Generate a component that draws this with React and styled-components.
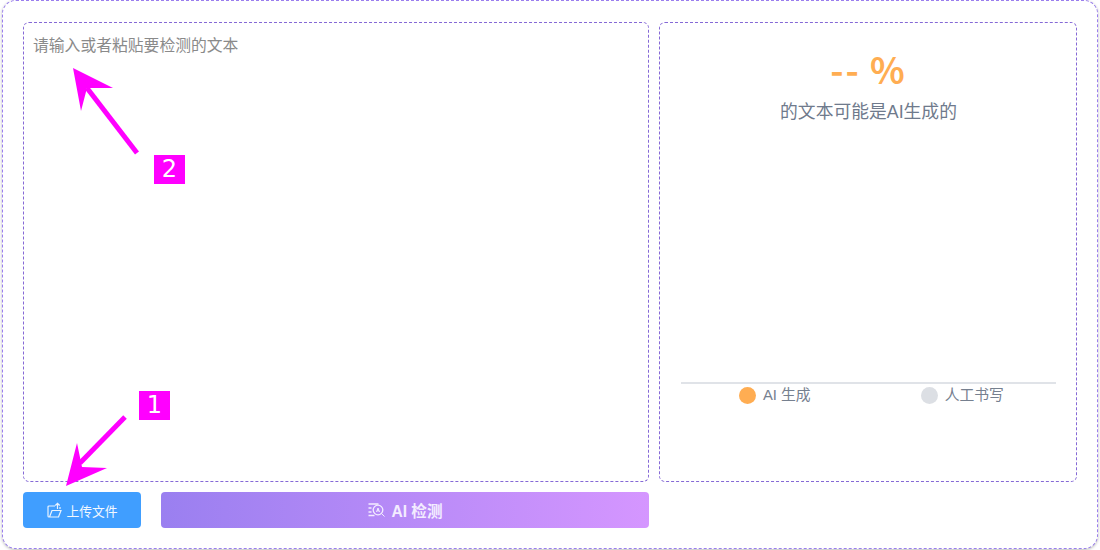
import React from "react";
import styled, { createGlobalStyle } from "styled-components";

const Global = createGlobalStyle`
  html, body { margin: 0; padding: 0; background: #fff; }
  #root { width: 1100px; height: 550px; overflow: hidden; }
  * { box-sizing: border-box; }
`;
const FONT = `"Liberation Sans", "Noto Sans CJK SC", sans-serif`;

const Stage = styled.div`
  position: relative;
  width: 1100px;
  height: 550px;
  padding: 0 2px 1px 2px;
  font-family: ${FONT};
`;
const Card = styled.main`
  width: 100%;
  height: 100%;
  border: 1px dashed #9a7eee;
  border-radius: 14px;
  box-shadow: 0 1px 3px rgba(0, 0, 0, 0.28);
  background: #fff;
  padding: 21px 20px 20px 20px;
  display: grid;
  grid-template-columns: 626px 418px;
  grid-template-rows: 460px 36px;
  column-gap: 10px;
  row-gap: 10px;
`;
const InputBox = styled.section`
  border: 1px dashed #8569d6;
  border-radius: 6px;
  padding: 10px 10px 10px 9px;
  display: flex;
`;
const TextInput = styled.textarea`
  flex: 1;
  border: 0;
  outline: 0;
  resize: none;
  padding: 3px 0 0 0;
  background: transparent;
  font: 15.8px/20px ${FONT};
  color: #333;
  &::placeholder { color: #8a8a8a; opacity: 1; }
`;
const ResultBox = styled.section`
  border: 1px dashed #8569d6;
  border-radius: 6px;
  padding: 23px 20px 0 21px;
  display: flex;
  flex-direction: column;
  align-items: center;
`;
const Percent = styled.div`
  font-family: "Noto Sans CJK SC", sans-serif;
  font-size: 36px;
  line-height: 44px;
  font-weight: 700;
  color: #ffad52;
  letter-spacing: 2px;
  word-spacing: -1px;
`;
const Caption = styled.div`
  margin-top: 10px;
  font-size: 17.8px;
  line-height: 24px;
  color: #6f7a8c;
`;
const Chart = styled.div`
  margin-top: 258px;
  width: 100%;
  border-top: 2px solid #e0e3e8;
  display: grid;
  grid-template-columns: 1fr 1fr;
  justify-items: center;
`;
const LegendItem = styled.div`
  display: flex;
  align-items: center;
  gap: 7px;
  font-size: 14.8px;
  line-height: 22px;
  color: #76808f;
`;
const Dot = styled.span`
  width: 17px;
  height: 17px;
  border-radius: 50%;
  background: ${(p) => p.$color};
`;
const Actions = styled.div`
  display: flex;
  gap: 20px;
`;
const UploadButton = styled.button`
  width: 118px;
  height: 36px;
  border: 0;
  border-radius: 4px;
  background: #409eff;
  color: #f2f8ff;
  font: 12.8px ${FONT};
  display: flex;
  align-items: center;
  justify-content: center;
  gap: 4px;
  padding: 0 0 0 1px;
`;
const DetectButton = styled.button`
  flex: 1;
  height: 36px;
  border: 0;
  border-radius: 4px;
  background: linear-gradient(90deg, #9a7ff0, #d596ff);
  color: #f3ecff;
  font: 700 15.6px ${FONT};
  display: flex;
  align-items: center;
  justify-content: center;
  gap: 6px;
  padding: 0 0 0 1px;
`;
const Overlay = styled.svg`
  position: absolute;
  inset: 0;
  pointer-events: none;
`;
const Badge = styled.span`
  position: absolute;
  left: ${(p) => p.$x}px;
  top: ${(p) => p.$y}px;
  width: 31px;
  height: 29px;
  background: #ff00ff;
  color: #fff;
  font: 24px/29px "DejaVu Sans", sans-serif;
  text-align: center;
`;

const UploadIcon = () => (
  <svg width="15" height="16" viewBox="0 0 15 16" fill="none" stroke="#e8f3ff" strokeWidth="1.2">
    <path d="M8 4H2a1 1 0 0 0-1 1v9a1 1 0 0 0 1 1h9.500L14 8.500H5L2.500 15" />
    <path d="M10.500 7V1.500M8.300 3.500l2.200-2.200 2.200 2.200M13 5v2" />
  </svg>
);
const DetectIcon = () => (
  <svg width="17" height="16" viewBox="0 0 17 16" fill="none" stroke="#f3ecff" strokeWidth="1.3">
    <path d="M0.500 2h10M0.500 6h3M0.500 10h3M0.500 13.500h6" />
    <circle cx="10" cy="8" r="4.800" />
    <path d="M13.500 11.500L16.500 14.500M8.500 10L10 6l1.500 4M9 8.800h2" strokeWidth="1" />
  </svg>
);

export default function App() {
  return (
    <Stage>
      <Global />
      <Card>
        <InputBox>
          <TextInput placeholder="请输入或者粘贴要检测的文本" />
        </InputBox>
        <ResultBox>
          <Percent>-- %</Percent>
          <Caption>的文本可能是AI生成的</Caption>
          <Chart>
            <LegendItem>
              <Dot $color="#ffad52" />
              AI 生成
            </LegendItem>
            <LegendItem>
              <Dot $color="#dcdfe4" />
              人工书写
            </LegendItem>
          </Chart>
        </ResultBox>
        <Actions>
          <UploadButton>
            <UploadIcon />
            上传文件
          </UploadButton>
          <DetectButton>
            <DetectIcon />
            AI 检测
          </DetectButton>
        </Actions>
      </Card>
      <Overlay width="1100" height="550" viewBox="0 0 1100 550">
        <path d="M137 153L87 88" stroke="#ff00ff" strokeWidth="5" />
        <path d="M73 68L113 88L87 88L81 111Z" fill="#ff00ff" />
        <path d="M125 417L80 463" stroke="#ff00ff" strokeWidth="5" />
        <path d="M66 486L77 443L82 467L107 468Z" fill="#ff00ff" />
      </Overlay>
      <Badge $x={154} $y={155}>2</Badge>
      <Badge $x={139} $y={391}>1</Badge>
    </Stage>
  );
}
